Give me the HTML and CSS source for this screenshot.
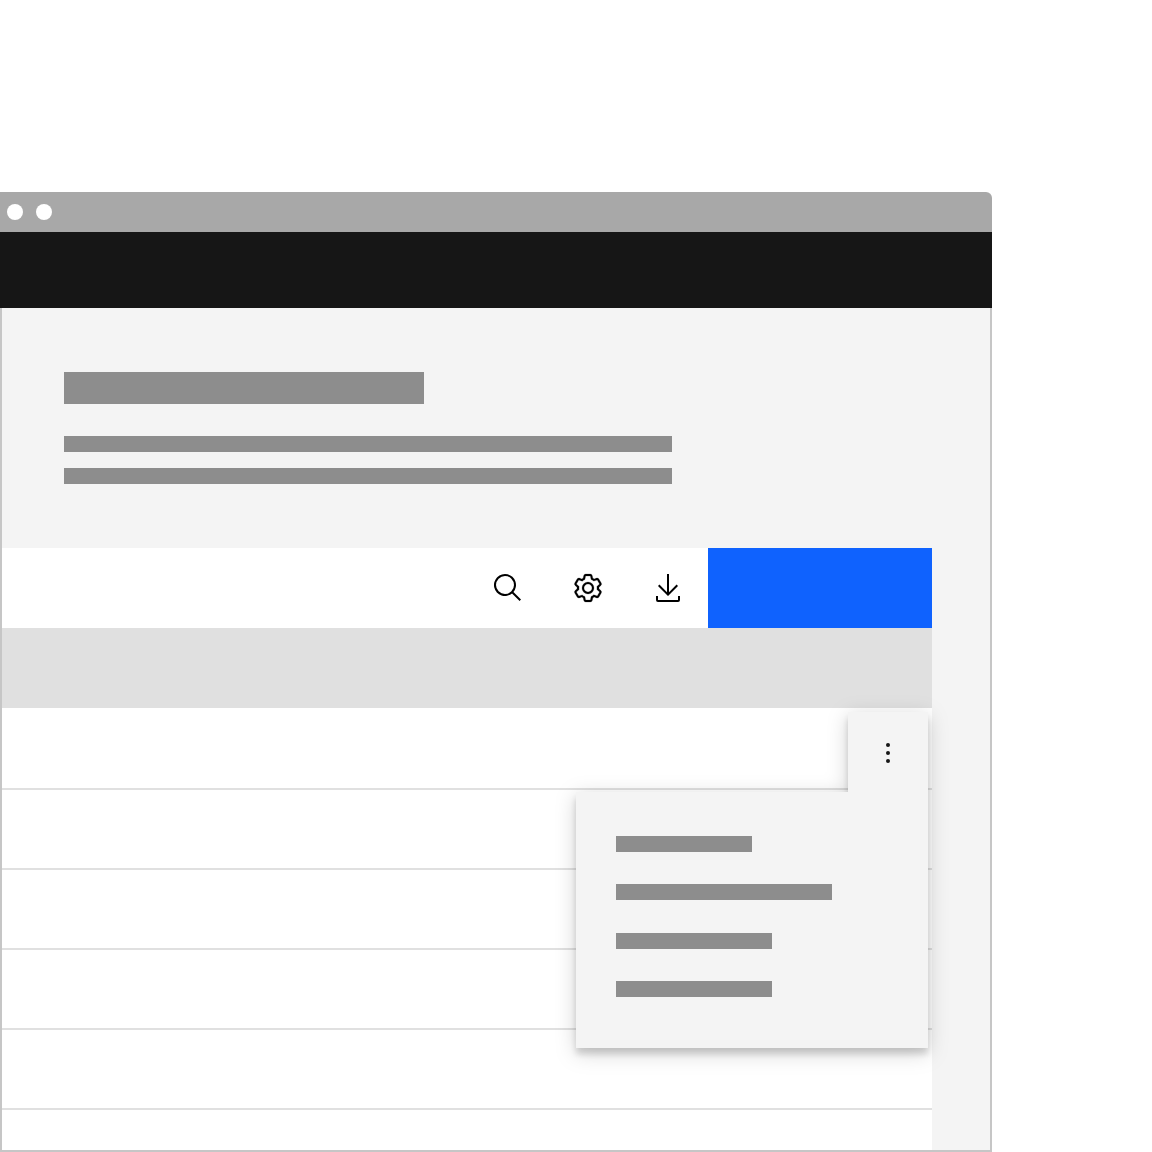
FILE: index.html
```html
<!DOCTYPE html>
<html lang="en">
<head>
    <meta charset="UTF-8">
    <meta name="viewport" content="width=device-width, initial-scale=1.0">
    <title>Data table overflow menu</title>
    <link rel="stylesheet" href="styles.css">
</head>
<body>
    <div class="window">
        <div class="chrome">
            <span class="dot"></span>
            <span class="dot"></span>
        </div>
        <div class="topbar"></div>
        <div class="page">
            <div class="intro">
                <div class="bar bar-title"></div>
                <div class="bar bar-text"></div>
                <div class="bar bar-text"></div>
            </div>
            <div class="table">
                <div class="toolbar">
                    <div class="tool">
                        <svg viewBox="0 0 32 32" width="32" height="32"><path d="M29 27.5859l-7.5521-7.5521a11.0177 11.0177 0 1 0-1.4141 1.4141L27.5859 29ZM4 13a9 9 0 1 1 9 9 9.01 9.01 0 0 1-9-9Z"/></svg>
                    </div>
                    <div class="tool tool-gear">
                        <svg viewBox="0 0 32 32" width="32" height="32"><path d="M27,16.76c0-.25,0-.5,0-.76s0-.51,0-.77l1.92-1.68A2,2,0,0,0,29.3,11L26.94,7a2,2,0,0,0-1.73-1,2,2,0,0,0-.64.1l-2.43.82a11.35,11.35,0,0,0-1.31-.75l-.51-2.52a2,2,0,0,0-2-1.61H13.64a2,2,0,0,0-2,1.61l-.51,2.52a11.48,11.48,0,0,0-1.32.75L7.43,6.06A2,2,0,0,0,6.79,6,2,2,0,0,0,5.06,7L2.7,11a2,2,0,0,0,.41,2.51L5,15.24c0,.25,0,.5,0,.76s0,.51,0,.77L3.11,18.45A2,2,0,0,0,2.7,21L5.06,25a2,2,0,0,0,1.73,1,2,2,0,0,0,.64-.1l2.43-.82a11.35,11.35,0,0,0,1.31.75l.51,2.52a2,2,0,0,0,2,1.61h4.72a2,2,0,0,0,2-1.61l.51-2.52a11.48,11.48,0,0,0,1.32-.75l2.42.82a2,2,0,0,0,.64.1,2,2,0,0,0,1.73-1L29.3,21a2,2,0,0,0-.41-2.51ZM25.21,24l-3.43-1.16a8.86,8.86,0,0,1-2.71,1.57L18.36,28H13.64l-.71-3.55a9.36,9.36,0,0,1-2.7-1.57L6.79,24,4.43,20l2.72-2.4a8.9,8.9,0,0,1,0-3.13L4.43,12,6.79,8l3.43,1.16a8.86,8.86,0,0,1,2.71-1.57L13.64,4h4.72l.71,3.55a9.36,9.36,0,0,1,2.7,1.57L25.21,8,27.57,12l-2.72,2.4a8.9,8.9,0,0,1,0,3.13L27.57,20Z"/><path d="M16,22a6,6,0,1,1,6-6A5.94,5.94,0,0,1,16,22Zm0-10a3.91,3.91,0,0,0-4,4,3.91,3.91,0,0,0,4,4,3.91,3.91,0,0,0,4-4A3.91,3.91,0,0,0,16,12Z"/></svg>
                    </div>
                    <div class="tool">
                        <svg viewBox="0 0 32 32" width="32" height="32"><path d="M26 24v4H6v-4H4v4a2 2 0 0 0 2 2h20a2 2 0 0 0 2-2v-4zM26 14l-1.41-1.41L17 20.17V2h-2v18.17l-7.59-7.58L6 14l10 10 10-10z"/></svg>
                    </div>
                    <div class="primary"></div>
                </div>
                <div class="table-head"></div>
                <div class="row row-first"></div>
                <div class="row"></div>
                <div class="row"></div>
                <div class="row"></div>
                <div class="row"></div>
                <div class="row row-last"></div>
            </div>

            <!-- Open overflow menu, lies over the table -->
            <div class="overflow">
                <div class="trigger">
                    <svg viewBox="0 0 32 32" width="32" height="32"><circle cx="16" cy="8" r="2"/><circle cx="16" cy="16" r="2"/><circle cx="16" cy="24" r="2"/></svg>
                </div>
                <div class="menu">
                    <div class="bar item-sm"></div>
                    <div class="bar item-lg"></div>
                    <div class="bar item-md"></div>
                    <div class="bar item-md"></div>
                </div>
            </div>
        </div>
    </div>
</body>
</html>
```

FILE: styles.css
```css
body {
    margin: 0;
    padding: 0;
    background-color: #ffffff;
    font-family: "Liberation Sans", sans-serif;
}
.window {
    width: 992px;
    height: 960px;
    margin-top: 192px;
    display: flex;
    flex-direction: column;
    overflow: hidden;
}
.chrome {
    height: 40px;
    flex: none;
    box-sizing: border-box;
    display: flex;
    align-items: center;
    gap: 13px;
    padding-left: 7px;
    padding-bottom: 1px;
    background-color: #a8a8a8;
    border-top-right-radius: 6px;
}
.dot {
    width: 16px;
    height: 16px;
    border-radius: 50%;
    background-color: #ffffff;
}
.topbar {
    height: 76px;
    flex: none;
    background-color: #161616;
}
.page {
    position: relative;
    flex: 1;
    min-height: 0;
    display: flex;
    flex-direction: column;
    background-color: #f4f4f4;
    border: 2px solid #c6c6c6;
    border-top: none;
}
.bar {
    background-color: #8d8d8d;
}
.intro {
    display: flex;
    flex-direction: column;
    gap: 16px;
    padding: 64px 62px;
}
.bar-title {
    width: 360px;
    height: 32px;
    margin-bottom: 16px;
}
.bar-text {
    width: 608px;
    height: 16px;
}
.table {
    flex: 1;
    min-height: 0;
    margin-right: 58px;
    display: flex;
    flex-direction: column;
    background-color: #ffffff;
}
.toolbar {
    height: 80px;
    flex: none;
    display: flex;
    justify-content: flex-end;
}
.tool {
    width: 80px;
    display: flex;
    justify-content: center;
    align-items: center;
}
.tool svg {
    fill: #000000;
}
.tool-gear svg {
    stroke: #000000;
    stroke-width: 0.2;
}
.primary {
    width: 224px;
    background-color: #0f62fe;
}
.table-head {
    height: 80px;
    flex: none;
    background-color: #e0e0e0;
}
.row {
    height: 80px;
    flex: none;
    box-sizing: border-box;
    border-bottom: 2px solid #e0e0e0;
}
.row-first {
    height: 82px;
}
.row-last {
    height: 40px;
    border-bottom: none;
}
.overflow {
    position: absolute;
    left: 574px;
    top: 404px;
    width: 352px;
    display: flex;
    flex-direction: column;
    align-items: flex-end;
    filter: drop-shadow(0 6px 3px rgba(0, 0, 0, 0.14)) drop-shadow(0 4px 10px rgba(0, 0, 0, 0.18));
}
.trigger {
    width: 80px;
    height: 80px;
    box-sizing: border-box;
    padding-top: 2px;
    display: flex;
    justify-content: center;
    align-items: center;
    background-color: #f4f4f4;
}
.trigger svg {
    fill: #161616;
}
.menu {
    width: 100%;
    height: 256px;
    box-sizing: border-box;
    padding: 44px 40px;
    display: flex;
    flex-direction: column;
    gap: 32.33px;
    background-color: #f4f4f4;
}
.menu .bar {
    height: 16px;
    flex: none;
}
.item-sm {
    width: 136px;
}
.item-md {
    width: 156px;
}
.item-lg {
    width: 216px;
}
```
